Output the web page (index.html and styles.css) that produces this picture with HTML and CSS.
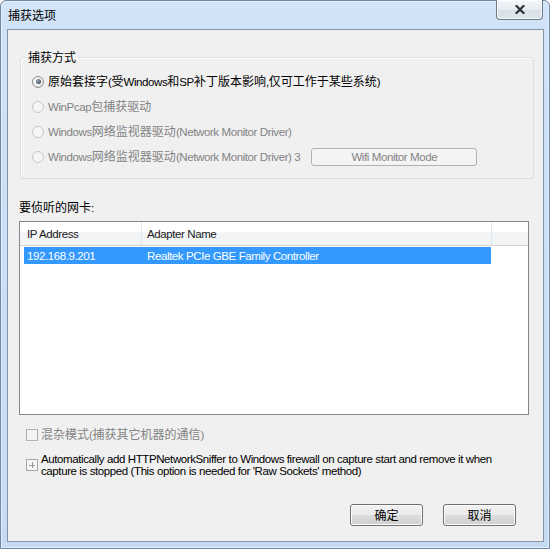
FILE: index.html
```html
<!DOCTYPE html>
<html lang="zh-CN">
<head>
<meta charset="utf-8">
<title>捕获选项</title>
<link rel="stylesheet" href="styles.css">
</head>
<body>
<div class="window">
  <div class="titlebar">
    <span class="title">捕获选项</span>
    <button class="close" aria-label="关闭">
      <svg width="10" height="9" viewBox="0 0 10 9"><path d="M1.5 1 L8.5 8 M8.5 1 L1.5 8" stroke="#2b3137" stroke-width="2.2" stroke-linecap="square" fill="none"/></svg>
    </button>
  </div>
  <div class="client">
    <fieldset class="group">
      <legend class="group-title">捕获方式</legend>
      <div class="radio-row"><span class="radio checked"></span><span class="rtext">原始套接字<span class="en">(</span>受<span class="en">Windows</span>和<span class="en">SP</span>补丁版本影响<span class="en">,</span>仅可工作于某些系统<span class="en">)</span></span></div>
      <div class="radio-row disabled"><span class="radio"></span><span class="rtext"><span class="en">WinPcap</span>包捕获驱动</span></div>
      <div class="radio-row disabled"><span class="radio"></span><span class="rtext"><span class="en">Windows</span>网络监视器驱动<span class="en">(Network Monitor Driver)</span></span></div>
      <div class="radio-row disabled"><span class="radio"></span><span class="rtext"><span class="en">Windows</span>网络监视器驱动<span class="en">(Network Monitor Driver) 3</span></span><button class="btn wifi en" disabled>Wifi Monitor Mode</button></div>
    </fieldset>
    <div class="list-label">要侦听的网卡<span class="en">:</span></div>
    <div class="listview en">
      <div class="lv-header">
        <div class="hcol c1">IP Address</div>
        <div class="hcol c2">Adapter Name</div>
        <div class="hcol c3"></div>
      </div>
      <div class="lv-row selected">
        <div class="cell c1">192.168.9.201</div>
        <div class="cell c2">Realtek PCIe GBE Family Controller</div>
      </div>
    </div>
    <div class="check-row disabled first"><span class="checkbox"></span><span class="ctext">混杂模式<span class="en">(</span>捕获其它机器的通信<span class="en">)</span></span></div>
    <div class="check-row second"><span class="checkbox plus"></span><span class="ctext long en">Automatically add HTTPNetworkSniffer to Windows firewall on capture start and remove it when capture is stopped (This option is needed for 'Raw Sockets' method)</span></div>
    <div class="buttons"><button class="btn">确定</button><button class="btn">取消</button></div>
  </div>
</div>
</body>
</html>
```

FILE: styles.css
```css
* { box-sizing: border-box; }
html, body { margin: 0; padding: 0; background: #ffffff; }
body {
  font-family: "Noto Sans CJK SC", "Noto Sans", sans-serif;
  font-size: 12px;
  line-height: 14px;
  color: #000;
}
.en {
  font-family: "Liberation Sans", Arial, sans-serif;
  font-size: 11.5px;
  letter-spacing: -0.4px;
}
.window {
  width: 550px;
  height: 549px;
  border: 1px solid #6d87a6;
  border-radius: 6px 6px 0 0;
  background: linear-gradient(#d3e5f7 0px, #cfe2f6 40px, #c6dbf1 100%);
  box-shadow: inset 0 0 0 1px #e6f0fa;
  padding: 0 5px 6px 6px;
  display: flex;
  flex-direction: column;
}
.titlebar {
  height: 28px;
  display: flex;
  align-items: flex-start;
}
.title {
  margin-top: 7px;
  margin-left: 1px;
  color: #000;
}
.close {
  margin-left: auto;
  margin-top: -1px;
  margin-right: 1px;
  width: 47px;
  height: 20px;
  border: 1px solid #707b89;
  border-top: none;
  border-radius: 0 0 4px 4px;
  background: linear-gradient(#f3f6fa 0%, #e7ecf2 50%, #d9e0e8 51%, #dfe5ec 100%);
  box-shadow: inset 0 0 0 1px rgba(255,255,255,0.7);
  padding: 0;
  display: flex;
  align-items: center;
  justify-content: center;
}
.client {
  flex: 1;
  border: 1px solid #8295ad;
  background: #f0f0f0;
  display: flex;
  flex-direction: column;
}
.group {
  margin: 20px 9px 0 12px;
  padding: 5px 8px 9px 11px;
  border: 1px solid #d5dfe5;
  border-radius: 3px;
  box-shadow: inset 1px 1px 0 #fff;
}
.group-title {
  padding: 0 2px;
  margin-left: -6px;
  line-height: 14px;
}
.radio-row {
  height: 25px;
  display: flex;
  align-items: center;
}
.radio {
  width: 12px;
  height: 12px;
  border-radius: 50%;
  border: 1px solid #8e8f8f;
  background: radial-gradient(circle at 40% 35%, #ffffff 0%, #f2f2f2 45%, #d8d8d8 100%);
  margin-right: 4px;
  flex: none;
  display: flex;
  align-items: center;
  justify-content: center;
}
.radio.checked::after {
  content: "";
  width: 5px;
  height: 5px;
  border-radius: 50%;
  background: radial-gradient(circle at 40% 35%, #a0a8b0 0%, #4a5561 70%);
}
.disabled .radio {
  border-color: #c5c7c9;
  background: #f6f6f6;
}
.disabled { color: #838383; }
.btn {
  font: inherit;
  color: #000;
  width: 73px;
  height: 22px;
  border: 1px solid #707070;
  border-radius: 3px;
  background: linear-gradient(#f2f2f2 0%, #ebebeb 50%, #dddddd 51%, #cfcfcf 100%);
  box-shadow: inset 0 0 0 1px #fcfcfc;
  padding: 0;
}
.btn.wifi {
  font-family: "Liberation Sans", Arial, sans-serif;
  font-size: 11.5px;
  letter-spacing: -0.4px;
  width: 166px;
  height: 18px;
  margin-left: 11px;
  border-color: #adb2b5;
  background: #f4f4f4;
  box-shadow: none;
  color: #838383;
  line-height: 14px;
}
.list-label {
  margin: 21px 0 0 11px;
}
.listview {
  margin: 6px 14px 0 11px;
  height: 194px;
  border: 1px solid #828790;
  background: #fff;
  line-height: 14px;
}
.lv-header {
  height: 24px;
  display: flex;
  border-bottom: 1px solid #d5d5d5;
  background: linear-gradient(#ffffff 0%, #ffffff 45%, #f3f4f6 46%, #f3f4f6 100%);
}
.hcol {
  display: flex;
  align-items: center;
  color: #1a1a1a;
  border-right: 1px solid #e2e5ea;
}
.hcol.c1 { width: 122px; padding-left: 7px; }
.hcol.c2 { width: 350px; padding-left: 5px; }
.hcol.c3 { flex: 1; border-right: none; }
.lv-row {
  margin: 1px 0 0 4px;
  width: 467px;
  height: 17px;
  display: grid;
  grid-template-columns: 123px 1fr;
  align-items: center;
}
.lv-row.selected { background: #3399ff; color: #fff; }
.cell.c1 { padding-left: 3px; }
.check-row {
  display: flex;
  align-items: center;
  margin-left: 18px;
}
.check-row.first { margin-top: 13px; height: 13px; }
.check-row.second { margin-top: 12px; }
.checkbox {
  width: 12px;
  height: 12px;
  border: 1px solid #b1b1b1;
  background: #f4f4f4;
  margin-right: 3px;
  flex: none;
  position: relative;
}
.checkbox.plus { border-color: #a7a7a7; background: #f6f6f6; }
.checkbox.plus::before,
.checkbox.plus::after {
  content: "";
  position: absolute;
  background: #9a9a9a;
}
.checkbox.plus::before { left: 2px; top: 4.5px; width: 6px; height: 1px; }
.checkbox.plus::after { left: 4.5px; top: 2px; width: 1px; height: 6px; }
.ctext.long {
  width: 470px;
  line-height: 12px;
}
.buttons {
  margin-top: auto;
  margin-bottom: 15px;
  margin-right: 27px;
  display: flex;
  justify-content: flex-end;
  gap: 20px;
}
```
